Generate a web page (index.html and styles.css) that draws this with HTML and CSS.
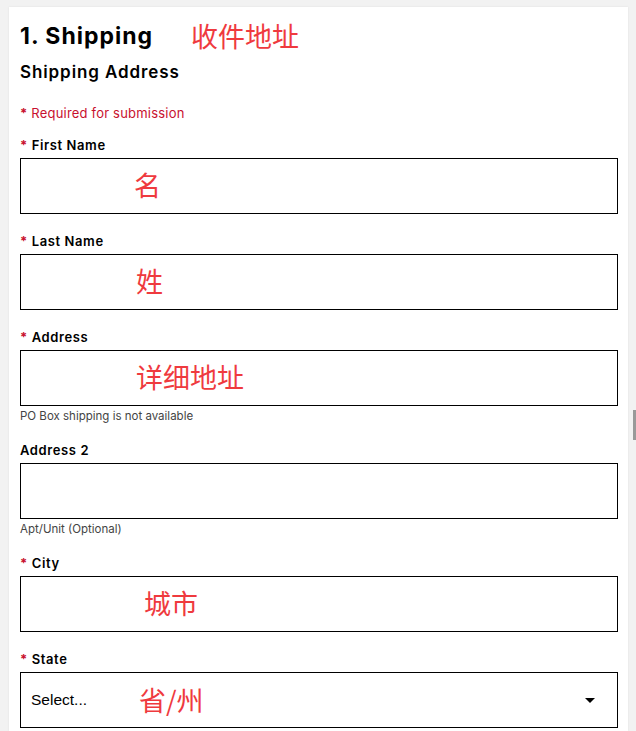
FILE: index.html
```html
<!DOCTYPE html>
<html lang="en">
<head>
  <meta charset="UTF-8">
  <meta name="viewport" content="width=device-width, initial-scale=1.0">
  <title>Shipping</title>
  <link rel="stylesheet" href="styles.css">
</head>
<body>
  <div class="page">
    <form class="card">
      <div class="title-row">
        <h1 class="title">1. Shipping</h1>
        <span class="note note-title">收件地址</span>
      </div>
      <h2 class="subtitle">Shipping Address</h2>
      <p class="required"><span class="star">*</span> Required for submission</p>

      <div class="field">
        <label class="label"><span class="star">*</span> First Name</label>
        <div class="box">
          <input class="input" type="text">
          <span class="note" style="left: 114px">名</span>
        </div>
      </div>

      <div class="field">
        <label class="label"><span class="star">*</span> Last Name</label>
        <div class="box">
          <input class="input" type="text">
          <span class="note" style="left: 116px">姓</span>
        </div>
      </div>

      <div class="field">
        <label class="label"><span class="star">*</span> Address</label>
        <div class="box">
          <input class="input" type="text">
          <span class="note" style="left: 116px">详细地址</span>
        </div>
        <div class="hint">PO Box shipping is not available</div>
      </div>

      <div class="field">
        <label class="label">Address 2</label>
        <div class="box">
          <input class="input" type="text">
        </div>
        <div class="hint">Apt/Unit (Optional)</div>
      </div>

      <div class="field">
        <label class="label"><span class="star">*</span> City</label>
        <div class="box">
          <input class="input" type="text">
          <span class="note" style="left: 124px">城市</span>
        </div>
      </div>

      <div class="field">
        <label class="label"><span class="star">*</span> State</label>
        <div class="box select">
          <span class="select-text">Select...</span>
          <span class="caret"></span>
          <span class="note" style="left: 118px">省/州</span>
        </div>
      </div>
    </form>
    <div class="scrollbar"><div class="thumb"></div></div>
  </div>
</body>
</html>
```

FILE: styles.css
```css
body {
  margin: 0;
  background-color: #f2f2f2;
  font-family: Inter, "Noto Sans", sans-serif;
  color: #000;
}
.page {
  display: flex;
  padding: 7px 0 0 9px;
  height: 724px;
  overflow: hidden;
}
.card {
  width: 598px;
  background-color: #fff;
  padding: 12px 10px 20px 11px;
  box-shadow: 0 0 2px rgba(0, 0, 0, 0.08);
}
.scrollbar {
  width: 8px;
  position: relative;
}
.thumb {
  position: absolute;
  right: 0;
  top: 403px;
  width: 3px;
  height: 30px;
  background-color: #999;
}
.title-row {
  display: flex;
  align-items: center;
  height: 34px;
}
.title {
  margin: 0;
  font-size: 23px;
  font-weight: 700;
  letter-spacing: 1px;
}
.note {
  font-family: "Noto Sans CJK SC", sans-serif;
  color: #ef3a3e;
  font-size: 27px;
  line-height: 34px;
  letter-spacing: 0;
  font-weight: 400;
  white-space: nowrap;
}
.note-title {
  margin-left: 38px;
}
.box .note {
  position: absolute;
  top: 10px;
}
.subtitle {
  margin: 7px 0 0;
  font-size: 17px;
  font-weight: 600;
  line-height: 24px;
  letter-spacing: 0.9px;
}
.required {
  margin: 20px 0 0;
  font-size: 13px;
  line-height: 18px;
  color: #c8102e;
  letter-spacing: 0.2px;
}
.star {
  color: #c8102e;
  font-weight: 700;
}
.field {
  margin-top: 14px;
}
.field + .field {
  margin-top: 18px;
}
.label {
  display: block;
  font-size: 13px;
  font-weight: 600;
  line-height: 18px;
  letter-spacing: 0.6px;
}
.box {
  position: relative;
  margin-top: 4px;
  height: 56px;
}
.input {
  box-sizing: border-box;
  width: 100%;
  height: 56px;
  border: 1px solid #000;
  border-radius: 0;
  margin: 0;
  padding: 0 10px;
  font-size: 15px;
  background: #fff;
}
.select {
  box-sizing: border-box;
  border: 1px solid #000;
  display: flex;
  align-items: center;
  justify-content: space-between;
  padding: 0 22px 0 10px;
}
.select-text {
  font-family: "Liberation Sans", Arial, sans-serif;
  font-size: 15.5px;
}
.caret {
  width: 0;
  height: 0;
  border-left: 5px solid transparent;
  border-right: 5px solid transparent;
  border-top: 5px solid #000;
}
.hint {
  margin-top: 3px;
  font-size: 11.5px;
  line-height: 14px;
  color: #444;
}
```
